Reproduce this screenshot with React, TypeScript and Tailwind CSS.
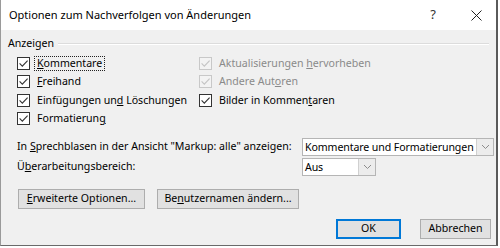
import React from "react";

type CheckProps = {
  label: React.ReactNode;
  disabled?: boolean;
  focused?: boolean;
};

const CheckRow = ({ label, disabled, focused }: CheckProps) => (
  <div className="flex h-[18.5px] items-center">
    <span
      className={`flex h-[13px] w-[13px] shrink-0 items-center justify-center border ${
        disabled ? "border-[#c8c8c8] bg-[#f3f3f3]" : "border-[#333333] bg-white"
      }`}>
      <svg width="11" height="11" viewBox="0 0 11 11">
        <path
          d="M1.6 5.4 L4.3 8.1 L9.6 2.6"
          fill="none"
          stroke={disabled ? "#c4c4c4" : "#333333"}
          strokeWidth="1.1"
        />
      </svg>
    </span>
    <span
      className={`ml-[5px] px-[2px] leading-[13px] ${
        focused ? "outline outline-1 outline-dotted outline-[#222]" : ""
      } ${disabled ? "text-[#8a8a8a]" : "text-[#000]"}`}>
      {label}
    </span>
  </div>
);

const Select = ({ text, width }: { text: string; width: string }) => (
  <div className={`flex h-[18px] shrink-0 border border-[#b5b5b5] bg-white ${width}`}>
    <span className="min-w-0 flex-1 overflow-hidden pl-[2px] leading-[16px] tracking-[-0.1px]">
      {text}
    </span>
    <span className="flex w-[17px] shrink-0 items-center justify-center border-l border-[#d0d0d0] bg-[#ececec]">
      <svg width="9" height="6" viewBox="0 0 9 6">
        <path d="M1 1 L4.5 4.5 L8 1" fill="none" stroke="#8c8c8c" strokeWidth="1" />
      </svg>
    </span>
  </div>
);

const Btn = ({
  children,
  width,
  primary,
}: {
  children: React.ReactNode;
  width: string;
  primary?: boolean;
}) => (
  <div
    className={`flex h-[20px] items-center justify-center bg-[#e1e1e1] ${width} ${
      primary ? "border-2 border-[#0078d7]" : "border border-[#adadad]"
    }`}>
    {children}
  </div>
);

export default function App() {
  return (
    <div className="h-[248px] w-[500px] whitespace-nowrap bg-white font-['Noto_Sans','Open_Sans',sans-serif] text-[10.6px] text-black">
      <div className="flex h-[246px] w-[498px] flex-col border-l border-r-2 border-b border-l-[#9a9a9a] border-r-[#5a5a5a] border-b-[#6a6a6a] bg-[#f0f0f0]">
        {/* title bar */}
        <div className="flex h-[30px] shrink-0 items-center bg-white pl-[8px] text-[11px]">
          <span>Optionen zum Nachverfolgen von Änderungen</span>
          <span className="ml-auto mr-[35px] text-[13px] text-[#333]">?</span>
          <svg className="mr-[14px]" width="11" height="11" viewBox="0 0 11 11">
            <path d="M0.5 0.5 L10.5 10.5 M10.5 0.5 L0.5 10.5" stroke="#222" strokeWidth="1" />
          </svg>
        </div>

        {/* group */}
        <div className="flex h-[24px] items-start pl-[7px] pr-[7px] pt-[7px]">
          <span className="leading-[13px]">Anzeigen</span>
          <div className="ml-[4px] mt-[6px] flex-1 border-t border-b border-t-[#dcdcdc] border-b-white" />
        </div>

        <div className="flex pl-[16px]">
          <div className="flex w-[182px] flex-col">
            <CheckRow
              focused
              label={
                <>
                  <u>K</u>ommentare
                </>
              }
            />
            <CheckRow
              label={
                <>
                  <u>F</u>reihand
                </>
              }
            />
            <CheckRow
              label={
                <>
                  Einfügungen un<u>d</u> Löschungen
                </>
              }
            />
            <CheckRow
              label={
                <>
                  Formatierun<u>g</u>
                </>
              }
            />
          </div>
          <div className="flex flex-col">
            <CheckRow
              disabled
              label={
                <>
                  Aktualisierungen <u>h</u>ervorheben
                </>
              }
            />
            <CheckRow
              disabled
              label={
                <>
                  Andere Aut<u>o</u>ren
                </>
              }
            />
            <CheckRow
              label={
                <>
                  Bilder in Kommen<u>t</u>aren
                </>
              }
            />
          </div>
        </div>

        {/* selects */}
        <div className="mt-[10px] flex flex-col gap-[2px] pl-[16px]">
          <div className="flex h-[18px] items-center">
            <span className="w-[285px] shrink-0">
              In <u>S</u>prechblasen in der Ansicht "Markup: alle" anzeigen:
            </span>
            <Select text="Kommentare und Formatierungen" width="w-[192px]" />
          </div>
          <div className="flex h-[18px] items-center">
            <span className="w-[285px] shrink-0">
              Ü<u>b</u>erarbeitungsbereich:
            </span>
            <Select text="Aus" width="w-[74px]" />
          </div>
        </div>

        {/* buttons */}
        <div className="mt-[13px] flex gap-[12px] pl-[17px]">
          <Btn width="w-[127px]">
            <span>
              <u>E</u>rweiterte Optionen...
            </span>
          </Btn>
          <Btn width="w-[142px]">
            <span>
              Be<u>n</u>utzernamen ändern...
            </span>
          </Btn>
        </div>

        <div className="mt-[10px] flex justify-end gap-[19px] pr-[5px]">
          <Btn primary width="w-[65px]">
            OK
          </Btn>
          <Btn width="w-[71px]">Abbrechen</Btn>
        </div>
      </div>
    </div>
  );
}
